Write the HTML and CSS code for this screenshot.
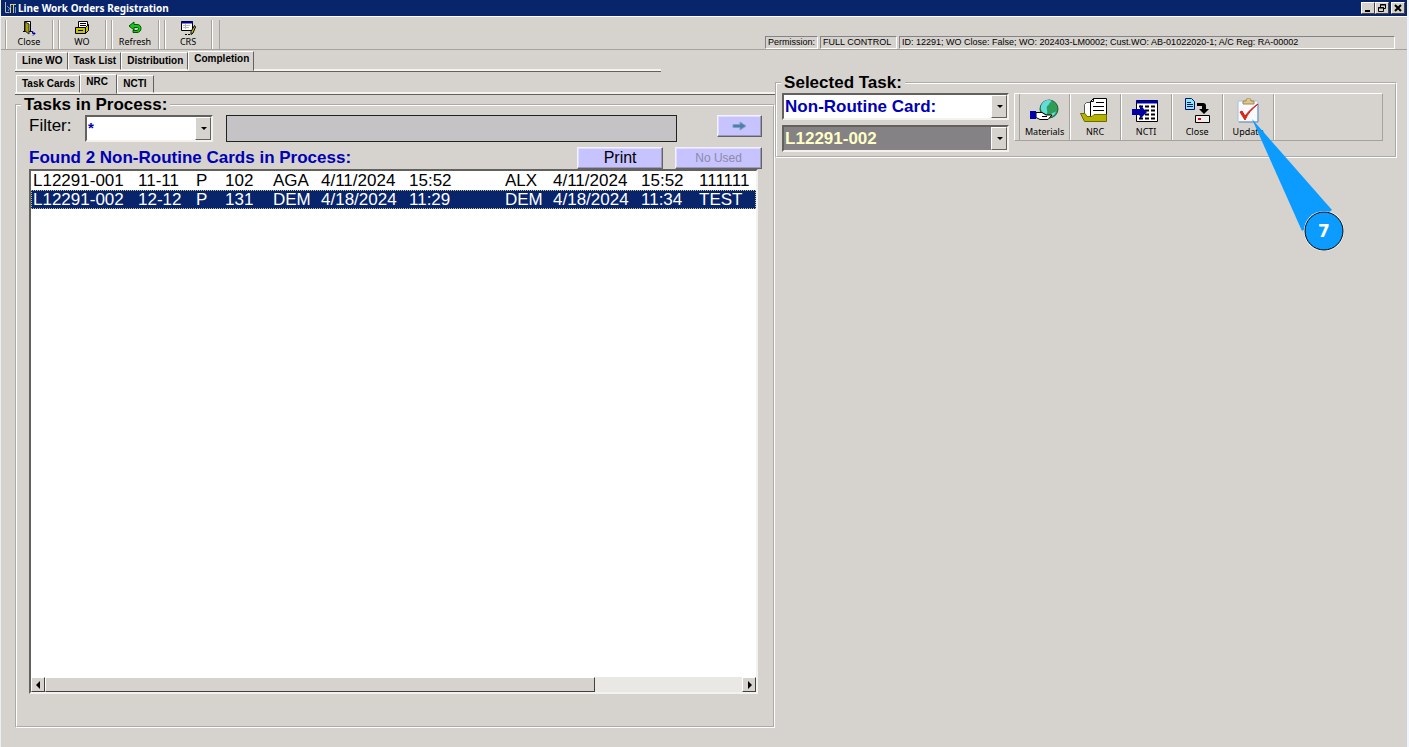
FILE: index.html
```html
<!DOCTYPE html>
<html lang="en">
<head>
  <meta charset="UTF-8">
  <title>Line Work Orders Registration</title>
  <link rel="stylesheet" href="styles.css">
</head>
<body>

<header class="titlebar">
  <svg class="app-icon" width="14" height="14" viewBox="0 0 14 14">
    <path d="M2.500 1v10.500h4" stroke="#b8b8a8" fill="none"/>
    <path d="M7.500 3v9M10.500 3v9M8 3.500h5" stroke="#d8cf78" fill="none"/>
    <path d="M4 5l2 2M5 10l3-5M12.500 6v6" stroke="#6d93d8" fill="none"/>
  </svg>
  <h1>Line Work Orders Registration</h1>
  <div class="window-buttons">
    <button aria-label="Minimize"><svg width="10" height="8"><path d="M2 7h5" stroke="#000" stroke-width="2"/></svg></button>
    <button aria-label="Restore"><svg width="10" height="8"><path d="M3.500 3V.5h5v4H7M3 1h6M1.500 3.500h5v4h-5zM1 4h6" stroke="#000" fill="none"/></svg></button>
    <button class="close" aria-label="Close window"><svg width="10" height="8"><path d="M2 1l6 6M8 1L2 7" stroke="#000" stroke-width="2"/></svg></button>
  </div>
</header>

<div class="toolbar">
  <button class="tool">
    <svg width="16" height="16" viewBox="0 0 16 16">
      <path d="M3.500 1.500h6v10h-6z" fill="#fff" stroke="#000"/>
      <path d="M4 2l4 2v10l-4-3z" fill="#a5a200" stroke="#222"/>
      <path d="M2 11.500h2" stroke="#000"/>
      <path d="M9 11.500h2.500v2H14M12 11.500l2 2-2 2" stroke="#00009c" fill="none"/>
    </svg>
    Close
  </button>
  <button class="tool">
    <svg width="16" height="16" viewBox="0 0 16 16">
      <path d="M4.500 7V1.500h9V8" fill="#fff" stroke="#000"/>
      <path d="M6 3.500h6M6 5.500h6" stroke="#000"/>
      <path d="M1.500 7.500h10v6h-10zM11.500 7.500l3-3v6l-3 3z" fill="#c6c300" stroke="#000"/>
      <path d="M4 10.500h5" stroke="#000"/>
    </svg>
    WO
  </button>
  <button class="tool">
    <svg width="16" height="16" viewBox="0 0 16 16">
      <path d="M2 6l5-4v2.500h3c3 0 4 2 4 4s-1.500 4-4 4H6v-2h3c2 0 2.500-1 2.500-2S11 7.500 9 7.500H7V10z" fill="#18c718" stroke="#005500"/>
    </svg>
    Refresh
  </button>
  <button class="tool">
    <svg width="16" height="16" viewBox="0 0 16 16">
      <path d="M1.500 1.500h11v9h-11z" fill="#fff" stroke="#000"/>
      <path d="M1 2.500h12" stroke="#00009c" stroke-width="2"/>
      <path d="M3 5.500h7M3 7.500h6M5.500 4v5" stroke="#bbb"/>
      <path d="M14.500 5.500l-3.500 6v3l2-1.500 2.500-6z" fill="#c6c300" stroke="#000"/>
      <path d="M5 14.500h2M8 14.500h2" stroke="#000"/>
    </svg>
    CRS
  </button>
  <div class="status">
    <span>Permission:</span>
    <span class="status-level">FULL CONTROL</span>
    <span class="status-info">ID: 12291; WO Close: False; WO: 202403-LM0002; Cust.WO: AB-01022020-1; A/C Reg: RA-00002</span>
  </div>
</div>

<main class="content">
  <section class="left">
    <nav class="tabs tabs-main">
      <button>Line WO</button>
      <button>Task List</button>
      <button>Distribution</button>
      <button class="active">Completion</button>
    </nav>
    <nav class="tabs">
      <button>Task Cards</button>
      <button class="active">NRC</button>
      <button>NCTI</button>
    </nav>

    <fieldset class="group tasks">
      <legend>Tasks in Process:</legend>
      <div class="filter-row">
        <label for="filter">Filter:</label>
        <div class="combo combo-filter">
          <select id="filter"><option>*</option></select>
        </div>
        <output class="filter-text"></output>
        <button class="btn btn-go" aria-label="Apply filter">
          <svg width="16" height="10" viewBox="0 0 16 10"><path d="M1 3.500h7V1l6 4-6 4V6.500H1z" fill="#4f7fa8" stroke="#7f9fc8"/></svg>
        </button>
      </div>
      <div class="found-row">
        <h2>Found 2 Non-Routine Cards in Process:</h2>
        <button class="btn btn-print">Print</button>
        <button class="btn btn-used" disabled>No Used</button>
      </div>
      <div class="list">
        <div class="list-body">
          <table>
            <colgroup>
              <col class="c-card"><col class="c-ata"><col class="c-type"><col class="c-num">
              <col class="c-user"><col class="c-date"><col class="c-time"><col class="c-user">
              <col class="c-date"><col class="c-end"><col class="c-text">
            </colgroup>
            <tr><td>L12291-001</td><td>11-11</td><td>P</td><td>102</td><td>AGA</td><td>4/11/2024</td><td>15:52</td><td>ALX</td><td>4/11/2024</td><td>15:52</td><td>111111</td></tr>
            <tr class="selected"><td>L12291-002</td><td>12-12</td><td>P</td><td>131</td><td>DEM</td><td>4/18/2024</td><td>11:29</td><td>DEM</td><td>4/18/2024</td><td>11:34</td><td>TEST</td></tr>
          </table>
        </div>
        <div class="scrollbar">
          <button aria-label="Scroll left"><svg width="5" height="8"><path d="M4 0v8L0 4z"/></svg></button>
          <div class="thumb"></div>
          <div class="track"></div>
          <button aria-label="Scroll right"><svg width="5" height="8"><path d="M1 0v8l4-4z"/></svg></button>
        </div>
      </div>
    </fieldset>
  </section>

  <section class="right">
    <fieldset class="group selected-task">
      <legend>Selected Task:</legend>
      <div class="combos">
        <div class="combo combo-type">
          <select aria-label="Task type"><option>Non-Routine Card:</option></select>
        </div>
        <div class="combo combo-card">
          <select aria-label="Task number"><option>L12291-002</option></select>
        </div>
      </div>
      <div class="actions">
        <button>
          <svg width="32" height="28" viewBox="0 0 32 28">
            <circle cx="20" cy="11" r="9" fill="#2e9e57" stroke="#17603a"/>
            <path d="M12 8c2-6 8-7 11-5-3 1-3 5-5 5-1 3 1 5 0 8-4 0-7-4-6-8z" fill="#63dcdc"/>
            <path d="M22 16c2-2 4-1 5-3-1 4-3 5-5 5z" fill="#63dcdc"/>
            <path d="M7 14.500h6l4 2.500h6l-4 4.500h-8l-4-2z" fill="#fff" stroke="#000"/>
            <path d="M13 18.500h5" stroke="#000"/>
            <path d="M1 13h6v8H1z" fill="#0000a5"/>
          </svg>
          Materials
        </button>
        <button>
          <svg width="32" height="28" viewBox="0 0 32 28">
            <path d="M5.500 20V6.500l2-2h4l2 2V20" fill="#fff" stroke="#555"/>
            <path d="M11.500 20.500v-17l3-3h13v20z" fill="#fff" stroke="#000"/>
            <path d="M11.500 3.500h3v-3" fill="none" stroke="#000"/>
            <path d="M17 4.500h8M14 8.500h11M14 12.500h11" stroke="#000"/>
            <path d="M1.500 15.500l4 8h22v-7H15l-2 2H8l-2-3z" fill="#b5b200" stroke="#6b6900"/>
          </svg>
          NRC
        </button>
        <button>
          <svg width="32" height="28" viewBox="0 0 32 28">
            <path d="M6.500 2.500h21v21h-21z" fill="#fff" stroke="#000"/>
            <path d="M6 4h22" stroke="#0000a5" stroke-width="3"/>
            <path d="M9 8.500h17M9 12.500h17M9 16.500h17M9 20.500h17" stroke="#000" stroke-width="2" stroke-dasharray="4 2"/>
            <path d="M2 11h8V7l7 7-7 7v-4H2z" fill="#0000a5"/>
          </svg>
          NCTI
        </button>
        <button>
          <svg width="32" height="28" viewBox="0 0 32 28">
            <path d="M4.500.5h6l3 3v8h-9z" fill="#8be9f5" stroke="#00106b"/>
            <path d="M6 4.500h4M6 6.500h6M6 8.500h6" stroke="#00106b"/>
            <path d="M16 5h6c2 0 3 1 3 3v3h3l-5 5-5-5h3V8h-5z" fill="#000"/>
            <path d="M14.500 17.500h14v7h-14z" fill="#eee" stroke="#000"/>
            <path d="M17 21h3" stroke="#e00000" stroke-width="2"/>
          </svg>
          Close
        </button>
        <button class="update">
          <svg width="32" height="28" viewBox="0 0 32 28">
            <rect x="6" y="3" width="20" height="21" rx="1" fill="#f8faff" stroke="#a8c0e0"/>
            <path d="M7 24h19V6" fill="none" stroke="#6b8cc0"/>
            <path d="M11 6V3h3c0-4 5-4 5 0h3v3z" fill="#dcc68c" stroke="#a28a4c"/>
            <path d="M8 14l5 8C16 15 20 11 26 6c-5 3-9 7-13 12l-3-5z" fill="#e02818" stroke="#d02010"/>
          </svg>
          Update
          <svg class="callout" width="96" height="136" viewBox="0 0 96 136">
            <path d="M2 2L82 93 52 114z" fill="#0c9bff"/>
            <circle cx="74" cy="114" r="20" fill="#fff"/>
            <circle cx="74" cy="114" r="19" fill="#0c9bff" stroke="#000"/>
            <text x="74" y="120" text-anchor="middle">7</text>
          </svg>
        </button>
      </div>
    </fieldset>
  </section>
</main>

</body>
</html>
```
FILE: styles.css
```css
* {
  box-sizing: border-box;
}

body {
  margin: 0;
  height: 100vh;
  display: flex;
  flex-direction: column;
  background-color: #d6d3ce;
  border-left: 1px solid #e8f0fa;
  border-right: 2px solid #f0f6ff;
  font-family: "Liberation Sans", Arial, sans-serif;
  color: #000;
}

h1, h2 {
  margin: 0;
}

button, select {
  font-family: inherit;
  color: inherit;
}

button {
  margin: 0;
  padding: 0;
  border: none;
  background-color: transparent;
}

/* Title bar */
.titlebar {
  display: flex;
  align-items: center;
  height: 16px;
  padding: 0 2px;
  background-color: #08246b;
  color: #fff;
}

.titlebar h1 {
  flex: 1;
  margin-left: 1px;
  font-family: "Noto Sans", sans-serif;
  font-size: 10px;
  line-height: 14px;
}

.window-buttons {
  display: flex;
}

.window-buttons button {
  display: flex;
  align-items: center;
  justify-content: center;
  width: 14px;
  height: 12px;
  background-color: #d6d3ce;
  border: 1px solid;
  border-color: #fff #444 #444 #fff;
}

.window-buttons .close {
  margin-left: 2px;
}

/* Toolbar */
.toolbar {
  display: flex;
  height: 34px;
  padding: 3px 12px 0 4px;
  border-top: 1px solid #fff;
  border-bottom: 1px solid #a5a29c;
}

.tool {
  display: flex;
  flex-direction: column;
  align-items: center;
  width: 48px;
  margin-right: 5px;
  border-left: 1px solid #a5a29c;
  border-right: 1px solid #a5a29c;
  box-shadow: inset 1px 0 #fff, 1px 0 #fff;
  font-family: "Noto Sans", sans-serif;
  font-size: 9px;
  line-height: 12px;
}

.tool:nth-child(4) {
  box-shadow: inset 1px 0 #fff, 1px 0 #fff, 7px 0 #d6d3ce, 8px 0 #a5a29c;
}

.status {
  display: flex;
  flex: 0 1 630px;
  gap: 2px;
  margin-left: auto;
  align-self: flex-end;
  font-size: 9px;
  line-height: 11px;
  white-space: nowrap;
}

.status span {
  padding: 0 2px;
  border: 1px solid;
  border-color: #848284 #fff #fff #848284;
}

.status .status-level {
  width: 77px;
}

.status .status-info {
  flex: 1;
}

/* Page columns */
.content {
  flex: 1;
  display: grid;
  grid-template-columns: 55fr 45fr;
  padding: 0 10px 19px 14px;
}

.left {
  display: flex;
  flex-direction: column;
}

.right {
  padding-top: 23px;
}

/* Tabs */
.tabs {
  display: flex;
  align-items: flex-end;
  height: 22px;
  padding-left: 1px;
  border-bottom: 1px solid #63615e;
  box-shadow: inset 0 -2px #f4f2ee;
}

.tabs-main {
  width: 85%;
  margin-bottom: 1px;
}

.tabs button {
  min-width: 37px;
  height: 18px;
  margin-bottom: 1px;
  padding: 0 4px 0 5px;
  border: 1px solid;
  border-color: #fff #63615e transparent #fff;
  font-size: 10px;
  font-weight: bold;
  line-height: 14px;
  text-align: left;
}

.tabs .active {
  height: 20px;
  margin-bottom: 0;
  padding-bottom: 4px;
  background-color: #d6d3ce;
}

/* Group boxes */
.group {
  margin: 0;
  min-width: 0;
  border: 2px groove #fff;
}

.group legend {
  padding: 0 3px;
  font-size: 17px;
  font-weight: bold;
  line-height: 20px;
}

.tasks {
  flex: 1;
  display: flex;
  flex-direction: column;
  padding: 0 11px 32px 12px;
}

.tasks legend {
  margin-left: -8px;
}

.filter-row {
  display: flex;
  align-items: flex-start;
}

.filter-row label {
  width: 56px;
  font-size: 17px;
  line-height: 22px;
}

.filter-text {
  flex: 1;
  height: 27px;
  margin: 0 40px 0 13px;
  background-color: #c6c3c6;
  border: 1px solid #222;
}

.combo {
  position: relative;
  height: 27px;
  background-color: #fff;
  border: 2px solid;
  border-color: #63615e #f4f2ee #f4f2ee #63615e;
}

.combo select {
  appearance: none;
  width: 100%;
  height: 100%;
  padding: 0 16px 0 1px;
  border: none;
  background-color: transparent;
  color: #0000b5;
  font-size: 17px;
  font-weight: bold;
}

.combo::before {
  content: "";
  position: absolute;
  top: 0;
  right: 0;
  bottom: 0;
  width: 14px;
  background-color: #d6d3ce;
  border: 1px solid;
  border-color: #fff #63615e #63615e #fff;
  pointer-events: none;
}

.combo::after {
  content: "";
  position: absolute;
  top: 10px;
  right: 4px;
  border: 3px solid transparent;
  border-top-color: #000;
  border-bottom: none;
  pointer-events: none;
}

.combo-filter {
  width: 128px;
}

.combo-filter select {
  padding-bottom: 3px;
  font-size: 15px;
}

.btn {
  height: 22px;
  background-color: #c6c3ff;
  border: 1px solid;
  border-color: #f4f2ff #63616b #63616b #f4f2ff;
  box-shadow: inset -1px -1px #9c9ab5, inset 1px 1px #dedcff;
}

.btn-go {
  width: 45px;
}

.found-row {
  display: flex;
  margin-top: 5px;
}

.found-row h2 {
  flex: 1;
  color: #0000b5;
  font-size: 17px;
  line-height: 22px;
}

.btn-print {
  width: 86px;
  margin-right: 12px;
  font-size: 16px;
  line-height: 20px;
}

.btn-used {
  width: 87px;
  color: #8c8aa5;
  font-size: 12px;
}

/* Cards list */
.list {
  flex: 1;
  display: flex;
  flex-direction: column;
  margin-right: 4px;
  background-color: #fff;
  border: 2px solid;
  border-color: #63615e #f4f2ee #f4f2ee #63615e;
}

.list-body {
  flex: 1;
  overflow: hidden;
}

.list table {
  width: 100%;
  table-layout: fixed;
  border-collapse: collapse;
}

.list td {
  padding: 0 0 0 2px;
  font-size: 17px;
  line-height: 19px;
  white-space: nowrap;
}

.selected {
  background-color: #08246b;
  color: #fff;
  outline: 1px dotted #c6c38c;
  outline-offset: -1px;
}

.c-card { width: 105px; }
.c-ata { width: 58px; }
.c-type { width: 29px; }
.c-num { width: 48px; }
.c-user { width: 48px; }
.c-date { width: 88px; }
.c-time { width: 96px; }
.c-end { width: 58px; }

.scrollbar {
  display: flex;
  height: 15px;
  background-color: #e9e8e4;
}

.scrollbar button {
  display: flex;
  align-items: center;
  justify-content: center;
  width: 14px;
}

.scrollbar button, .thumb {
  background-color: #d6d3ce;
  border: 1px solid;
  border-color: #fff #42413f #42413f #fff;
}

.thumb {
  flex: 78;
}

.track {
  flex: 21;
}

/* Selected task */
.selected-task {
  display: flex;
  align-items: flex-start;
  gap: 5px;
  padding: 0 12px 4px 5px;
}

.selected-task legend {
  margin-left: -1px;
}

.combos {
  display: flex;
  flex-direction: column;
  flex: 0 0 227px;
  gap: 5px;
}

.combo-card {
  background-color: #848284;
}

.combo-card select {
  color: #ffffc6;
}

.actions {
  flex: 1;
  display: flex;
  height: 48px;
  padding-left: 4px;
  border: 1px solid;
  border-color: #fff #a5a29c #a5a29c #fff;
}

.actions button {
  position: relative;
  display: flex;
  flex-direction: column;
  align-items: center;
  width: 51px;
  padding-top: 4px;
  border-right: 1px solid #a5a29c;
  box-shadow: 1px 0 #fff;
  font-family: "Noto Sans", sans-serif;
  font-size: 9px;
  line-height: 12px;
}

.actions button:first-child {
  border-left: 1px solid #a5a29c;
}

/* Numbered pointer over the Update button */
.callout {
  position: absolute;
  top: 23px;
  left: 27px;
  z-index: 1;
}

.callout text {
  fill: #fff;
  font-family: "DejaVu Sans", sans-serif;
  font-size: 17px;
  font-weight: bold;
}
```
